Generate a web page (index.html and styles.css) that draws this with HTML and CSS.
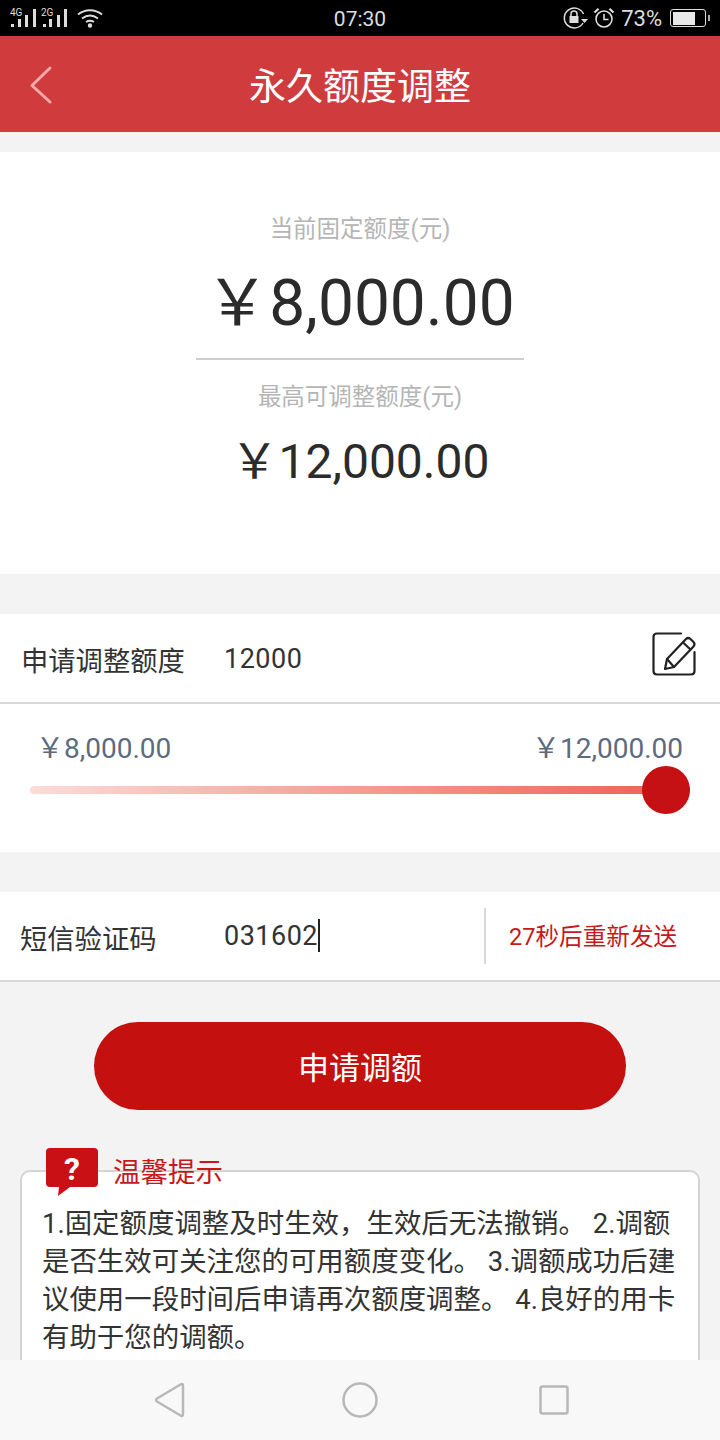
FILE: index.html
```html
<!DOCTYPE html>
<html lang="zh-CN">
<head>
    <meta charset="UTF-8">
    <meta name="viewport" content="width=device-width, initial-scale=1.0">
    <title>永久额度调整</title>
    <link rel="stylesheet" href="styles.css">
</head>
<body>

<div class="screen">
    <div class="statusbar">
        <div class="status-left">
            <svg class="signal" width="68" height="26" viewBox="0 0 68 26">
                <text x="10" y="11" class="net">4G</text>
                <text x="41" y="11" class="net">2G</text>
                <g fill="#ddd">
                    <rect x="11" y="19" width="3" height="3"/>
                    <rect x="18" y="14" width="3" height="8"/>
                    <rect x="25" y="10" width="3" height="12"/>
                    <rect x="33" y="4" width="3" height="18"/>
                    <rect x="43" y="19" width="3" height="3"/>
                    <rect x="49" y="14" width="3" height="8"/>
                    <rect x="57" y="10" width="3" height="12"/>
                    <rect x="64" y="4" width="3" height="18"/>
                </g>
            </svg>
            <svg class="wifi" width="26" height="20" viewBox="0 0 26 20" fill="none" stroke="#ddd" stroke-width="2">
                <path d="M1 6.500C8 .8 18 .8 25 6.500"/>
                <path d="M5 10.500C10 6.800 16 6.800 21 10.500"/>
                <path d="M9 14C11.500 12.400 14.500 12.400 17 14"/>
                <circle cx="13" cy="17.500" r="1.200" fill="#ddd"/>
            </svg>
        </div>
        <div class="status-time">07:30</div>
        <div class="status-right">
            <svg width="26" height="24" viewBox="0 0 26 24" fill="none" stroke="#ddd" stroke-width="1.500">
                <path d="M20 17A10 10 0 1 1 20.500 8"/>
                <path d="M18 13h7l-3.500 4z" fill="#ddd" stroke="none"/>
                <rect x="6.500" y="10" width="9" height="7" fill="#ddd" stroke="none"/>
                <path d="M8 10V8a3 3 0 0 1 6 0v2"/>
            </svg>
            <svg width="22" height="24" viewBox="0 0 22 24" fill="none" stroke="#ddd" stroke-width="1.600">
                <circle cx="11" cy="13" r="8"/>
                <path d="M11 8v5.500h4.500"/>
                <path d="M1.500 6.500 5.500 2.800M20.500 6.500 16.500 2.800" stroke-width="2.200"/>
            </svg>
            <span class="battery-text">73%</span>
            <div class="battery"><div class="battery-fill" style="width: 73%"></div></div>
            <div class="battery-tip"></div>
        </div>
    </div>

    <div class="navbar">
        <svg class="back" width="24" height="40" viewBox="0 0 24 40" fill="none" stroke="#f7a9a9" stroke-width="3" stroke-linecap="round" stroke-linejoin="round">
            <path d="M21 3 3 20.500 21 37"/>
        </svg>
        <h1>永久额度调整</h1>
    </div>

    <div class="content">
        <div class="summary">
            <p class="summary-label">当前固定额度(元)</p>
            <p class="amount-big">￥8,000.00</p>
            <div class="summary-line"></div>
            <p class="summary-label second">最高可调整额度(元)</p>
            <p class="amount-mid">￥12,000.00</p>
        </div>

        <div class="panel adjust">
            <div class="row">
                <span class="row-label">申请调整额度</span>
                <span class="row-value">12000</span>
                <svg class="edit" width="46" height="46" viewBox="0 0 46 46" fill="none" stroke="#222" stroke-width="2.200" stroke-linecap="round" stroke-linejoin="round">
                    <path d="M30 2.500H6Q2.500 2.500 2.500 6V40Q2.500 43.500 6 43.500H40Q43.500 43.500 43.500 40V21"/>
                    <path d="M16 28 35 8Q37 6 39.500 8L42.500 11Q44.500 13 42.500 15.500L23 36 14 38Z"/>
                    <path d="M32 11.500 39.500 18.500"/>
                    <path d="M16 28 23 36"/>
                </svg>
            </div>
            <div class="slider-box">
                <div class="slider-labels">
                    <span>￥8,000.00</span>
                    <span>￥12,000.00</span>
                </div>
                <div class="slider">
                    <div class="slider-track"></div>
                    <div class="slider-thumb"></div>
                </div>
            </div>
        </div>

        <div class="panel sms">
            <span class="row-label sms-label">短信验证码</span>
            <span class="sms-code">031602</span>
            <span class="resend">27秒后重新发送</span>
        </div>

        <div class="btn-wrap">
            <button class="apply">申请调额</button>
        </div>

        <div class="tips">
            <div class="tips-title">
                <svg width="52" height="48" viewBox="0 0 52 48">
                    <path d="M4 0H48Q52 0 52 4V35Q52 39 48 39H24L12 48 13 39H4Q0 39 0 35V4Q0 0 4 0Z" fill="#c91015"/>
                    <text x="26" y="32" class="tips-q">?</text>
                </svg>
                <span>温馨提示</span>
            </div>
            <p>1.固定额度调整及时生效，生效后无法撤销。 2.调额是否生效可关注您的可用额度变化。 3.调额成功后建议使用一段时间后申请再次额度调整。 4.良好的用卡有助于您的调额。</p>
        </div>
    </div>

    <div class="bottombar">
        <svg width="32" height="36" viewBox="0 0 32 36" fill="none" stroke="#b8b8b8" stroke-width="2.500" stroke-linejoin="round">
            <path d="M29 4Q29 1 26.500 2.500L3 16.500Q1 18 3 19.500L26.500 33.500Q29 35 29 32Z"/>
        </svg>
        <svg width="36" height="36" viewBox="0 0 36 36" fill="none" stroke="#b8b8b8" stroke-width="2.500">
            <circle cx="18" cy="18" r="16.500"/>
        </svg>
        <svg class="nav-square" width="30" height="30" viewBox="0 0 30 30" fill="none" stroke="#b8b8b8" stroke-width="2.500">
            <rect x="1.500" y="1.500" width="27" height="27" rx="2"/>
        </svg>
    </div>
</div>

</body>
</html>
```

FILE: styles.css
```css
* {
    box-sizing: border-box;
}
html, body {
    margin: 0;
    padding: 0;
}
body {
    font-family: Roboto, "Noto Sans CJK SC", sans-serif;
    background-color: #f3f3f3;
}
p, h1 {
    margin: 0;
    font-weight: normal;
}
.screen {
    width: 720px;
    height: 1440px;
    display: flex;
    flex-direction: column;
    overflow: hidden;
}

/* status bar */
.statusbar {
    height: 36px;
    flex: none;
    background: #000;
    color: #ddd;
    display: flex;
    align-items: center;
    justify-content: space-between;
    position: relative;
}
.status-left {
    display: flex;
    align-items: center;
    gap: 9px;
}
.net {
    font-size: 10px;
    fill: #ddd;
    font-family: Roboto, sans-serif;
}
.status-time {
    position: absolute;
    left: 0;
    right: 0;
    top: 6px;
    text-align: center;
    font-size: 21px;
    line-height: 26px;
}
.status-right {
    display: flex;
    align-items: center;
    gap: 4px;
    padding-right: 10px;
}
.battery-text {
    font-size: 22px;
    margin-left: 2px;
    margin-right: 4px;
}
.battery {
    width: 36px;
    height: 18px;
    border: 1.5px solid #ddd;
    border-radius: 3px;
    padding: 1.5px;
}
.battery-fill {
    height: 100%;
    background: #e8e8e8;
}
.battery-tip {
    width: 2px;
    height: 6px;
    margin-left: -2px;
    background: #aaa;
}

/* nav */
.navbar {
    height: 96px;
    flex: none;
    background: #d03c3e;
    display: flex;
    align-items: center;
    justify-content: center;
    position: relative;
}
.navbar h1 {
    color: #fff;
    font-size: 37px;
}
.back {
    position: absolute;
    left: 29px;
    top: 29px;
}

.content {
    flex: 1;
    min-height: 0;
    overflow: hidden;
    padding-top: 20px;
}

/* amounts */
.summary {
    height: 422px;
    background: #fff;
    display: flex;
    flex-direction: column;
    align-items: center;
    padding-top: 60px;
}
.summary-label {
    color: #b5b5b5;
    font-size: 23.500px;
    line-height: 34px;
}
.summary-label.second {
    margin-top: 20px;
}
.amount-big {
    color: #2b2b2b;
    font-size: 64px;
    line-height: 76px;
    margin-top: 20px;
    margin-bottom: 16px;
}
.amount-mid {
    color: #2b2b2b;
    font-size: 48px;
    line-height: 56px;
    margin-top: 20px;
}
.summary-line {
    width: 328px;
    height: 2px;
    background: #cecece;
}

.panel {
    background: #fff;
}
.adjust {
    margin-top: 40px;
    height: 238px;
}
.row {
    height: 90px;
    border-bottom: 2px solid #d8d8d8;
    display: flex;
    align-items: center;
    padding-left: 21px;
    padding-right: 23px;
}
.row-label {
    font-size: 27.300px;
    color: #333;
    width: 203px;
    flex: none;
}
.row > .row-label {
    margin-top: 1px;
}
.row-value {
    flex: 1;
    font-size: 27px;
    color: #333;
    letter-spacing: 0.5px;
    margin-top: 1px;
}
.edit {
    margin-top: -8px;
}
.slider-box {
    padding: 28px 30px 0;
}
.slider-labels {
    display: flex;
    justify-content: space-between;
    color: #5e6b7e;
    font-size: 28px;
    line-height: 34px;
    padding: 0 7px 0 6px;
}
.slider {
    position: relative;
    height: 48px;
    display: flex;
    align-items: center;
}
.slider-track {
    width: 100%;
    height: 8px;
    border-radius: 4px;
    background: linear-gradient(to right, #fbdcd9, #ec5f4d);
}
.slider-thumb {
    position: absolute;
    right: 0;
    top: 0;
    width: 48px;
    height: 48px;
    border-radius: 50%;
    background: #c51014;
}

.sms {
    margin-top: 40px;
    height: 90px;
    border-bottom: 2px solid #d8d8d8;
    display: flex;
    align-items: center;
    padding-left: 20px;
}
.sms-label {
    width: 204px;
    margin-top: 2px;
}
.sms-code {
    width: 260px;
    font-size: 27px;
    color: #333;
    letter-spacing: 0.5px;
    line-height: 36px;
}
.sms-code::after {
    content: "";
    display: inline-block;
    width: 2px;
    height: 33px;
    background: #222;
    vertical-align: -7px;
}
.resend {
    height: 56px;
    line-height: 58px;
    border-left: 2px solid #d8d8d8;
    padding-left: 23px;
    color: #c5191c;
    font-size: 23.600px;
}

.btn-wrap {
    display: flex;
    justify-content: center;
    margin-top: 40px;
}
.apply {
    width: 532px;
    height: 88px;
    padding-bottom: 2px;
    border: none;
    border-radius: 44px;
    background: #c51010;
    color: #fff;
    font-family: inherit;
    font-size: 31px;
}

/* tips */
.tips {
    position: relative;
    margin: 60px 20px 0;
    background: #fff;
    border: 2px solid #d4d4d4;
    border-radius: 10px;
    padding: 33px 20px 40px 20px;
}
.tips-title {
    position: absolute;
    left: 24px;
    top: -24px;
    display: flex;
    align-items: flex-start;
    gap: 15px;
    color: #c5191c;
    font-size: 27.500px;
}
.tips-title span {
    line-height: 40px;
    margin-top: 5px;
}
.tips-q {
    fill: #fff;
    font-size: 32px;
    font-weight: bold;
    text-anchor: middle;
    font-family: Roboto, sans-serif;
}
.tips p {
    color: #333;
    font-size: 27.450px;
    line-height: 38px;
}

.bottombar {
    height: 80px;
    flex: none;
    background: #f8f8f8;
    display: flex;
    align-items: center;
    padding-left: 154px;
    gap: 156px;
}
.nav-square {
    margin-left: 5px;
}
```
